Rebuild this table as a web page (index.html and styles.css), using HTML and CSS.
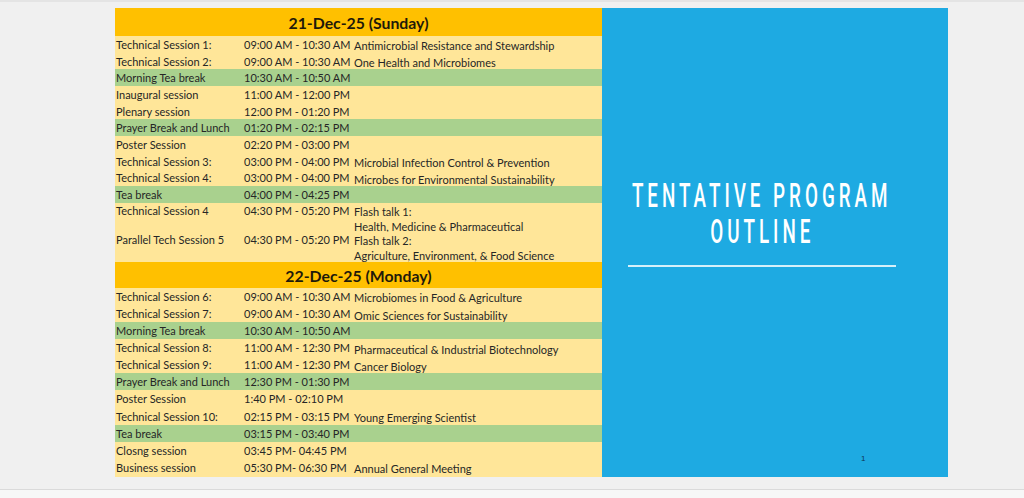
FILE: index.html
```html
<!DOCTYPE html>
<html>
<head>
<meta charset="utf-8">
<link rel="stylesheet" href="styles.css">
</head>
<body>
<div class="workspace">
  <div class="slide">
    <div class="schedule">
      <div class="day-head first">21-Dec-25 (Sunday)</div>
      <div class="row a y"><span>Technical Session 1:</span><span>09:00 AM - 10:30 AM</span><span class="d">Antimicrobial Resistance and Stewardship</span></div>
      <div class="row a y"><span>Technical Session 2:</span><span>09:00 AM - 10:30 AM</span><span class="d">One Health and Microbiomes</span></div>
      <div class="row a g"><span>Morning Tea break</span><span>10:30 AM - 10:50 AM</span><span class="d"></span></div>
      <div class="row a y"><span>Inaugural session</span><span>11:00 AM - 12:00 PM</span><span class="d"></span></div>
      <div class="row a y"><span>Plenary session</span><span>12:00 PM - 01:20 PM</span><span class="d"></span></div>
      <div class="row a g"><span>Prayer Break and Lunch</span><span>01:20 PM - 02:15 PM</span><span class="d"></span></div>
      <div class="row a y"><span>Poster Session</span><span>02:20 PM - 03:00 PM</span><span class="d"></span></div>
      <div class="row a y"><span>Technical Session 3:</span><span>03:00 PM - 04:00 PM</span><span class="d">Microbial Infection Control &amp; Prevention</span></div>
      <div class="row a y"><span>Technical Session 4:</span><span>03:00 PM - 04:00 PM</span><span class="d">Microbes for Environmental Sustainability</span></div>
      <div class="row a g"><span>Tea break</span><span>04:00 PM - 04:25 PM</span><span class="d"></span></div>
      <div class="row s y"><span>Technical Session 4</span><span>04:30 PM - 05:20 PM</span><span class="d">Flash talk 1:</span></div>
      <div class="row s y"><span></span><span></span><span class="d">Health, Medicine &amp; Pharmaceutical</span></div>
      <div class="row s y"><span>Parallel Tech Session 5</span><span>04:30 PM - 05:20 PM</span><span class="d">Flash talk 2:</span></div>
      <div class="row s y"><span></span><span></span><span class="d">Agriculture, Environment, &amp; Food Science</span></div>
      <div class="day-head second">22-Dec-25 (Monday)</div>
      <div class="row b y"><span>Technical Session 6:</span><span>09:00 AM - 10:30 AM</span><span class="d">Microbiomes in Food &amp; Agriculture</span></div>
      <div class="row b y"><span>Technical Session 7:</span><span>09:00 AM - 10:30 AM</span><span class="d"><span class="spell">Omic</span>&nbsp;Sciences for Sustainability</span></div>
      <div class="row b g"><span>Morning Tea break</span><span>10:30 AM - 10:50 AM</span><span class="d"></span></div>
      <div class="row b y"><span>Technical Session 8:</span><span>11:00 AM - 12:30 PM</span><span class="d">Pharmaceutical &amp; Industrial Biotechnology</span></div>
      <div class="row b y"><span>Technical Session 9:</span><span>11:00 AM - 12:30 PM</span><span class="d">Cancer Biology</span></div>
      <div class="row b g"><span>Prayer Break and Lunch</span><span>12:30 PM - 01:30 PM</span><span class="d"></span></div>
      <div class="row b y"><span>Poster Session</span><span>1:40 PM - 02:10 PM</span><span class="d"></span></div>
      <div class="row b y"><span>Technical Session 10:</span><span>02:15 PM - 03:15 PM</span><span class="d">Young Emerging Scientist</span></div>
      <div class="row b g"><span>Tea break</span><span>03:15 PM - 03:40 PM</span><span class="d"></span></div>
      <div class="row b y"><span>Closng session</span><span>03:45 PM- 04:45 PM</span><span class="d"></span></div>
      <div class="row b y"><span>Business session</span><span>05:30 PM- 06:30 PM</span><span class="d">Annual General Meeting</span></div>
    </div>
    <div class="panel">
      <div class="title-box">
        <div class="title"><span>TENTATIVE PROGRAM</span></div>
        <div class="title"><span>OUTLINE</span></div>
        <div class="rule"></div>
      </div>
      <div class="page-num">1</div>
    </div>
  </div>
</div>
<div class="footer"></div>
</body>
</html>
```
FILE: styles.css
```css
* { box-sizing: border-box; }
html, body { margin: 0; padding: 0; }
body {
  background: #f0f0f0;
  width: 1024px;
  height: 498px;
  overflow: hidden;
  font-family: Lato, "Liberation Sans", sans-serif;
}
.workspace {
  height: 489px;
  border-top: 2px solid #e4e4e4;
  padding: 6px 0 0 115px;
}
.footer {
  height: 9px;
  background: #f7f7f7;
  border-top: 1px solid #dadada;
}
.slide {
  display: flex;
  width: 833px;
  height: 469px;
}
.schedule {
  flex: none;
  width: 487px;
  display: flex;
  flex-direction: column;
  background: #ffe699;
  color: #262626;
  font-size: 11px;
}
.day-head {
  background: #ffc000;
  font-weight: 700;
  font-size: 15.8px;
  color: #1f1a0a;
  display: flex;
  align-items: center;
  justify-content: center;
  padding-top: 1px;
}
.day-head.first { height: 28px; }
.day-head.second { height: 26px; }
.row {
  display: grid;
  grid-template-columns: 128px 110px 1fr;
  padding-left: 1px;
  white-space: nowrap;
}
.row > span {
  display: flex;
  align-items: center;
}
.row > .d { padding-top: 3px; }
.row.a { height: 16.7px; }
.row.b { height: 17.1px; }
.row.s { height: 14.75px; }
.row.s > .d { padding-top: 2px; }
.y { background: #ffe699; }
.g { background: #a9d18e; }
.spell {
  text-decoration: underline wavy #e0392b;
  text-decoration-thickness: 1px;
  text-underline-offset: 2px;
}
.panel {
  flex: none;
  width: 346px;
  min-width: 0;
  position: relative;
  background: #1eaae2;
  padding: 170px 52px 0 26px;
}
.title-box {
  width: 268px;
  display: flex;
  flex-direction: column;
  align-items: center;
}
.title {
  width: 268px;
  height: 36px;
  line-height: 36px;
  display: flex;
  justify-content: center;
  color: #ffffff;
  font-family: Roboto, "Liberation Sans", sans-serif;
  font-weight: 500;
  font-size: 33px;
  white-space: nowrap;
}
.title span {
  display: inline-block;
  flex: none;
  letter-spacing: 7px;
  transform: scaleX(0.57);
}
.rule {
  margin-top: 15px;
  width: 268px;
  height: 1.5px;
  background: #d6f0fa;
}
.page-num {
  position: absolute;
  left: 259px;
  top: 446px;
  font-size: 8px;
  color: #0d3550;
  font-family: "Liberation Sans", sans-serif;
}
```
